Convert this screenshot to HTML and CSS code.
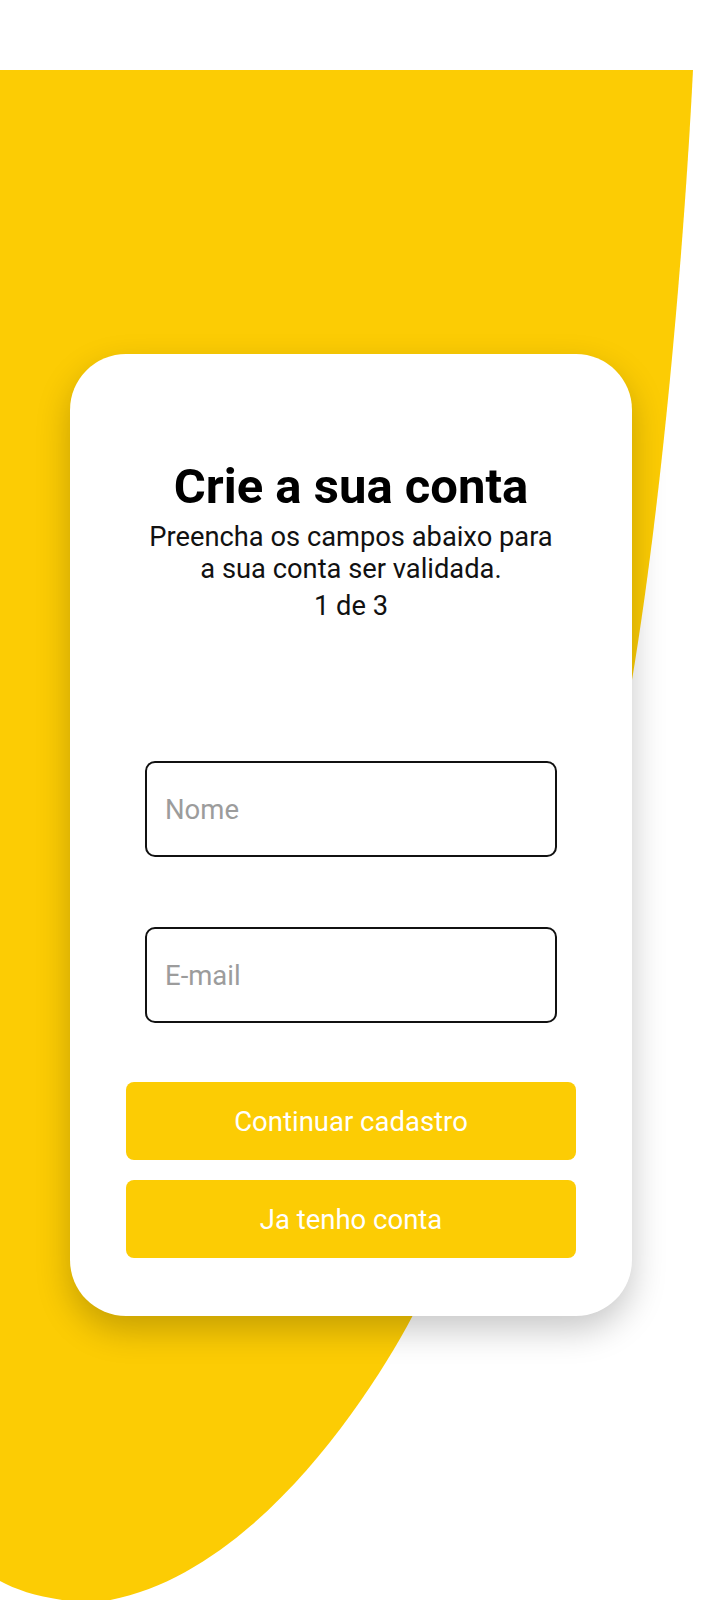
FILE: index.html
```html
<!DOCTYPE html>
<html lang="pt-BR">
<head>
<meta charset="utf-8">
<title>Crie a sua conta</title>
<link rel="stylesheet" href="styles.css">
</head>
<body>
<svg class="blob" width="702" height="1600" viewBox="0 0 702 1600" aria-hidden="true">
  <path d="M0 70 L693 70 C684 250 662 500 632 680 C600 830 462 1200 412 1317 C368 1400 245 1588 90 1603 C48 1600 20 1592 0 1581 Z" fill="#fccc04"/>
</svg>
<main class="card">
  <h1 class="title">Crie a sua conta</h1>
  <p class="subtitle">Preencha os campos abaixo para<br>a sua conta ser validada.</p>
  <p class="step">1 de 3</p>
  <form class="form">
    <input class="field field-name" type="text" placeholder="Nome">
    <input class="field field-email" type="email" placeholder="E-mail">
    <div class="actions">
      <button class="btn" type="button">Continuar cadastro</button>
      <button class="btn" type="button">Ja tenho conta</button>
    </div>
  </form>
</main>
</body>
</html>
```
FILE: styles.css
```css
* { box-sizing: border-box; }
html, body {
  margin: 0;
  padding: 0;
  background: #ffffff;
}
body {
  width: 702px;
  min-height: 1600px;
  position: relative;
  overflow: hidden;
  font-family: Roboto, "Liberation Sans", Arial, sans-serif;
}
.blob {
  position: absolute;
  top: 0;
  left: 0;
  z-index: 0;
  display: block;
}
.card {
  position: relative;
  z-index: 1;
  width: 562px;
  margin: 354px 0 0 70px;
  padding: 105px 0 58px;
  background: #ffffff;
  border-radius: 56px;
  box-shadow: 0 14px 34px rgba(0, 0, 0, 0.22);
  display: flex;
  flex-direction: column;
  align-items: center;
}
.title {
  margin: 0;
  font-size: 49px;
  line-height: 56px;
  font-weight: 700;
  color: #000000;
  text-align: center;
}
.subtitle {
  margin: 6px 0 0;
  font-size: 27.3px;
  line-height: 32px;
  color: #111111;
  text-align: center;
}
.step {
  margin: 5px 0 0;
  font-size: 27.3px;
  line-height: 32px;
  color: #111111;
  text-align: center;
}
.form {
  margin-top: 139px;
  width: 100%;
  display: flex;
  flex-direction: column;
  align-items: center;
}
.field {
  display: block;
  width: 412px;
  height: 96px;
  margin: 0;
  padding: 0 18px;
  border: 2px solid #111111;
  border-radius: 10px;
  background: #ffffff;
  font-family: Roboto, "Liberation Sans", Arial, sans-serif;
  font-size: 27.5px;
  color: #222222;
  outline: none;
}
.field::placeholder {
  color: #9c9c9c;
}
.field-email {
  margin-top: 70px;
}
.actions {
  margin-top: 59px;
  display: flex;
  flex-direction: column;
  gap: 20px;
}
.btn {
  width: 450px;
  height: 78px;
  border: none;
  border-radius: 8px;
  background: #fccc04;
  color: #ffffff;
  font-family: Roboto, "Liberation Sans", Arial, sans-serif;
  font-size: 27.5px;
  font-weight: 400;
  padding: 0;
  cursor: pointer;
}
```
